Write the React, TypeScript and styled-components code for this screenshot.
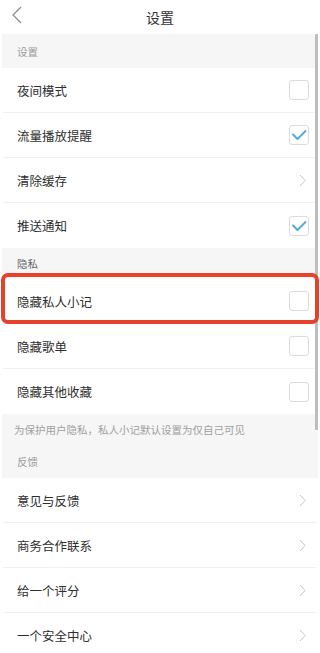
import React from "react";
import styled, { createGlobalStyle } from "styled-components";

const GlobalStyle = createGlobalStyle`
  html, body {
    margin: 0;
    padding: 0;
    background: #ffffff;
    overflow: hidden;
  }
  * {
    box-sizing: border-box;
  }
  body {
    font-family: "Noto Sans CJK SC", "Noto Sans", sans-serif;
  }
`;

type Control = "check" | "empty" | "arrow";

const sections: {
  title: string;
  dark?: boolean;
  rows: { label: string; control: Control; highlight?: boolean }[];
  note?: string;
}[] = [
  {
    title: "设置",
    rows: [
      { label: "夜间模式", control: "empty" },
      { label: "流量播放提醒", control: "check" },
      { label: "清除缓存", control: "arrow" },
      { label: "推送通知", control: "check" },
    ],
  },
  {
    title: "隐私",
    dark: true,
    rows: [
      { label: "隐藏私人小记", control: "empty", highlight: true },
      { label: "隐藏歌单", control: "empty" },
      { label: "隐藏其他收藏", control: "empty" },
    ],
    note: "为保护用户隐私，私人小记默认设置为仅自己可见",
  },
  {
    title: "反馈",
    rows: [
      { label: "意见与反馈", control: "arrow" },
      { label: "商务合作联系", control: "arrow" },
      { label: "给一个评分", control: "arrow" },
      { label: "一个安全中心", control: "arrow" },
    ],
  },
];

const App = () => {
  return (
    <Page>
      <GlobalStyle />
      <Header>
        <Back>
          <svg width="12" height="18" viewBox="0 0 12 18">
            <path d="M10 1 L2 9 L10 17" fill="none" stroke="#8a8a8a" strokeWidth="1.2" />
          </svg>
        </Back>
        <Title>设置</Title>
      </Header>
      <List>
        {sections.map((s) => (
          <React.Fragment key={s.title}>
            <SectionHead $dark={s.dark}>{s.title}</SectionHead>
            {s.rows.map((r, i) => (
              <Row key={r.label} $last={i === s.rows.length - 1}>
                <Label>{r.label}</Label>
                {r.control === "arrow" ? (
                  <Arrow>
                    <svg width="7" height="13" viewBox="0 0 7 13">
                      <path d="M1 1 L6 6.5 L1 12" fill="none" stroke="#c4c4c4" strokeWidth="1" />
                    </svg>
                  </Arrow>
                ) : (
                  <Box>
                    {r.control === "check" && (
                      <svg width="16" height="12" viewBox="0 0 16 12">
                        <path
                          d="M2 5.5 L6.5 10 L14.5 2"
                          fill="none"
                          stroke="#55acdc"
                          strokeWidth="2"
                          strokeLinecap="round"
                          strokeLinejoin="round"
                        />
                      </svg>
                    )}
                  </Box>
                )}
                {r.highlight && <Highlight />}
              </Row>
            ))}
            {s.note && <Note>{s.note}</Note>}
          </React.Fragment>
        ))}
        <ScrollBar />
      </List>
    </Page>
  );
};

export default App;

const Page = styled.div`
  width: 320px;
  height: 653px;
  background: #ffffff;
  overflow: hidden;
`;

const Header = styled.div`
  position: relative;
  height: 34px;
  display: flex;
  align-items: center;
  justify-content: center;
  background: #ffffff;
`;

const Back = styled.div`
  position: absolute;
  left: 11px;
  top: 6px;
  display: flex;
`;

const Title = styled.div`
  font-size: 14px;
  color: #333333;
`;

const List = styled.div`
  position: relative;
`;

const SectionHead = styled.div<{ $dark?: boolean }>`
  height: ${(p) => (p.$dark ? "31px" : "34px")};
  background: #f6f6f6;
  display: flex;
  align-items: center;
  padding-left: 15px;
  font-size: 10.5px;
  color: ${(p) => (p.$dark ? "#666666" : "#9a9a9a")};
  margin: 0 2px;
`;

const Note = styled.div`
  height: 30px;
  background: #f6f6f6;
  display: flex;
  align-items: center;
  padding-left: 12px;
  font-size: 10.5px;
  color: #a0a0a0;
  margin: 0 2px;
`;

const Row = styled.div<{ $last?: boolean }>`
  position: relative;
  height: 45px;
  display: flex;
  align-items: center;
  justify-content: space-between;
  padding: 0 5px 0 14px;
  border-bottom: ${(p) => (p.$last ? "none" : "1px solid #f1f1f1")};
  margin: 0 4px 0 3px;
`;

const Label = styled.div`
  font-size: 12.5px;
  color: #2e2e2e;
`;

const Box = styled.div`
  width: 20px;
  height: 20px;
  border: 1px solid #dcdcdc;
  border-radius: 3px;
  display: flex;
  align-items: center;
  justify-content: center;
  margin-right: 2px;
`;

const Arrow = styled.div`
  display: flex;
  margin-right: 5px;
`;

const Highlight = styled.div`
  position: absolute;
  left: -2px;
  right: -3px;
  top: -6px;
  bottom: -1px;
  border: 4px solid #e5412d;
  border-radius: 7px;
  pointer-events: none;
  z-index: 2;
`;

const ScrollBar = styled.div`
  position: absolute;
  right: 2px;
  top: 0;
  width: 3px;
  height: 396px;
  background: #bdbdbd;
  border-radius: 1px;
`;
